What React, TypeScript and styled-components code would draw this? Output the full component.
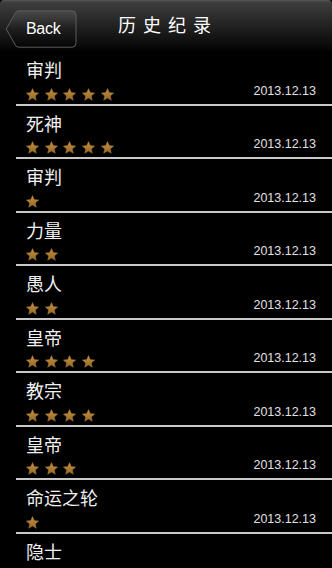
import React from "react";
import styled, { createGlobalStyle } from "styled-components";

const Global = createGlobalStyle`
  html, body { margin: 0; padding: 0; background: #000; }
  body { width: 332px; height: 568px; overflow: hidden; }
  * { box-sizing: border-box; }
`;

const Screen = styled.div`
  width: 332px;
  height: 568px;
  background: #000;
  overflow: hidden;
  font-family: "Noto Sans CJK SC", "Liberation Sans", sans-serif;
`;

const NavBar = styled.div`
  position: relative;
  height: 52px;
  display: flex;
  align-items: center;
  justify-content: center;
  border-radius: 4px 4px 0 0;
  background: linear-gradient(#5a5a5a 0px, #3e3e3e 2px, #262626 22px, #0c0c0c 44px, #000 52px);
`;

const BackButton = styled.div`
  position: absolute;
  left: 5px;
  top: 10px;
  width: 72px;
  height: 38px;
  display: flex;
  align-items: center;
  padding-left: 21px;
  color: #fff;
  font-family: "Liberation Sans", Arial, sans-serif;
  font-size: 16px;
`;

const ButtonShape = styled.svg`
  position: absolute;
  left: 0;
  top: 0;
`;

const ButtonLabel = styled.span`
  position: relative;
  letter-spacing: -0.3px;
`;

const Title = styled.div`
  color: #fff;
  font-size: 18px;
  letter-spacing: 7px;
  margin-left: 4px;
  margin-top: -4px;
`;

const List = styled.div`
  display: flex;
  flex-direction: column;
`;

const Row = styled.div`
  height: 53.5px;
  margin-left: 16px;
  border-bottom: 2px solid #c9c9c9;
  padding: 5px 16px 0 10px;
  display: flex;
  justify-content: space-between;
  align-items: flex-end;
`;

const Left = styled.div`
  display: flex;
  flex-direction: column;
  gap: 4px;
  padding-bottom: 3px;
  align-self: stretch;
  justify-content: space-between;
`;

const Name = styled.div`
  color: #f0f0f0;
  font-size: 18px;
  line-height: 24px;
`;

const Stars = styled.div`
  display: flex;
  gap: 5.7px;
  height: 13px;
`;

const DateText = styled.div`
  color: #e0e0e0;
  font-family: "Liberation Sans", Arial, sans-serif;
  font-size: 12.5px;
  padding-bottom: 6px;
`;

const Star = () => (
  <svg width="13" height="13" viewBox="0 0 24 24">
    <defs>
      <linearGradient id="sg" x1="0" y1="0" x2="0" y2="1">
        <stop offset="0" stopColor="#c4913e" />
        <stop offset="1" stopColor="#96692a" />
      </linearGradient>
    </defs>
    <polygon
      points="12,1 15.3,8.5 23.4,9.3 17.3,14.7 19.05,22.7 12,18.6 4.95,22.7 6.7,14.7 0.6,9.3 8.7,8.5"
      fill="url(#sg)"
      stroke="#a87a33"
      strokeWidth="0.8"
      strokeLinejoin="round"
    />
  </svg>
);

const records: { name: string; stars: number; date?: string }[] = [
  { name: "审判", stars: 5, date: "2013.12.13" },
  { name: "死神", stars: 5, date: "2013.12.13" },
  { name: "审判", stars: 1, date: "2013.12.13" },
  { name: "力量", stars: 2, date: "2013.12.13" },
  { name: "愚人", stars: 2, date: "2013.12.13" },
  { name: "皇帝", stars: 4, date: "2013.12.13" },
  { name: "教宗", stars: 4, date: "2013.12.13" },
  { name: "皇帝", stars: 3, date: "2013.12.13" },
  { name: "命运之轮", stars: 1, date: "2013.12.13" },
  { name: "隐士", stars: 2 },
];

export default function App() {
  return (
    <Screen>
      <Global />
      <NavBar>
        <BackButton>
          <ButtonShape width="72" height="38" viewBox="0 0 72 38">
            <defs>
              <linearGradient id="bg" x1="0" y1="0" x2="0" y2="1">
                <stop offset="0" stopColor="#4a4a4a" />
                <stop offset="0.5" stopColor="#1e1e1e" />
                <stop offset="1" stopColor="#050505" />
              </linearGradient>
            </defs>
            <path
              d="M14 0.8 H67 Q71 0.8 71 4.8 V33.2 Q71 37.2 67 37.2 H14 Q12 37.2 10.8 35.8 L1.2 19 L10.8 2.2 Q12 0.8 14 0.8 Z"
              fill="url(#bg)"
              stroke="#5c5c5c"
              strokeWidth="1"
            />
          </ButtonShape>
          <ButtonLabel>Back</ButtonLabel>
        </BackButton>
        <Title>历史纪录</Title>
      </NavBar>
      <List>
        {records.map((r, i) => (
          <Row key={i}>
            <Left>
              <Name>{r.name}</Name>
              <Stars>
                {Array.from({ length: r.stars }).map((_, j) => (
                  <Star key={j} />
                ))}
              </Stars>
            </Left>
            {r.date && <DateText>{r.date}</DateText>}
          </Row>
        ))}
      </List>
    </Screen>
  );
}
